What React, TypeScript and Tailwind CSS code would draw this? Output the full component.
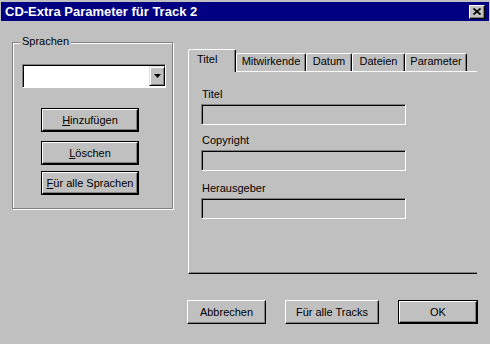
import React from "react";

const raised =
  "border border-t-white border-l-white border-b-black border-r-black shadow-[inset_-1px_-1px_0_#808080]";
const sunken =
  "border border-t-[#808080] border-l-[#808080] border-b-white border-r-white shadow-[inset_1px_1px_0_#000]";

const Btn = ({
  children,
  w,
  framed,
}: {
  children: React.ReactNode;
  w: string;
  framed?: boolean;
}) => {
  if (framed) {
    return (
      <div className={`${w} h-[24px] border border-black flex`}>
        <div className={`flex-1 ${raised} flex items-center justify-center text-[11px] leading-[13px]`}>
          {children}
        </div>
      </div>
    );
  }
  return (
    <div className={`${w} h-[24px] ${raised} flex items-center justify-center text-[11px] leading-[13px]`}>
      {children}
    </div>
  );
};

const Field = ({ label, className }: { label: string; className?: string }) => (
  <div className={className}>
    <div className="ml-[1px] h-[13px] text-[11px] leading-[13px] mb-[3px]">{label}</div>
    <div className={`w-[205px] h-[21px] bg-[#c0c0c0] ${sunken}`} />
  </div>
);

const tabs = [
  { name: "Mitwirkende", w: "w-[70px]" },
  { name: "Datum", w: "w-[46px]" },
  { name: "Dateien", w: "w-[53px]" },
  { name: "Parameter", w: "w-[62px]" },
];

export default function App() {
  return (
    <div className="w-[490px] h-[344px] bg-[#c0c0c0] overflow-hidden font-['Liberation_Sans',Arial,sans-serif] text-black flex flex-col">
      {/* title bar */}
      <div className="mt-[2px] mx-[1px] h-[19px] bg-[#000080] flex items-center justify-between pl-[4px] pr-[4px]">
        <span className="text-white font-bold text-[13px] leading-[16px]">CD-Extra Parameter für Track 2</span>
        <div className={`w-[16px] h-[14px] bg-[#c0c0c0] ${raised} flex items-center justify-center`}>
          <svg width="8" height="7" viewBox="0 0 8 7">
            <path d="M0.5 0.5 L7.5 6.5 M7.5 0.5 L0.5 6.5" stroke="#000" strokeWidth="1.7" />
          </svg>
        </div>
      </div>

      <div className="flex items-start">
        {/* Sprachen group */}
        <div className="ml-[12px] mt-[21px] w-[161px] h-[167px] relative border border-[#808080] shadow-[inset_1px_1px_0_#fff,1px_1px_0_#fff] pl-[9px] pt-[21px] flex flex-col items-start">
          <span className="absolute left-[7px] -top-[8px] px-[2px] bg-[#c0c0c0] text-[11px] leading-[13px]">
            Sprachen
          </span>
          <div className={`w-[144px] h-[24px] ${sunken} bg-white flex justify-end`}>
            <div className="mt-[1px] w-[16px] h-[20px] border border-t-[#dfdfdf] border-l-[#dfdfdf] border-b-black border-r-black bg-[#c0c0c0] shadow-[inset_1px_1px_0_#fff,inset_-1px_-1px_0_#808080] flex items-center justify-center">
              <svg width="7" height="4" viewBox="0 0 7 4">
                <path d="M0 0 H7 L3.5 4 Z" fill="#000" />
              </svg>
            </div>
          </div>
          <div className="ml-[19px] mt-[20px] flex flex-col">
            <Btn w="w-[98px]" framed>
              <span><u>H</u>inzufügen</span>
            </Btn>
            <div className="mt-[9px]">
              <Btn w="w-[98px]" framed>
                <span><u>L</u>öschen</span>
              </Btn>
            </div>
            <div className="mt-[6px]">
              <Btn w="w-[98px]" framed>
                <span><u>F</u>ür alle Sprachen</span>
              </Btn>
            </div>
          </div>
        </div>

        {/* tab control */}
        <div className="ml-[15px] mt-[28px] w-[289px] flex flex-col">
          <div className="h-[22px] flex items-end">
            <div className="relative z-10 -mb-[1px] w-[48px] h-[23px] bg-[#c0c0c0] border-t border-l border-r border-t-white border-l-white border-r-black rounded-tl-[2px] rounded-tr-[2px] shadow-[inset_-1px_0_0_#808080] pl-[8px] pt-[3px] text-[11px] leading-[13px]">
              Titel
            </div>
            {tabs.map((t) => (
              <div
                key={t.name}
                className={`${t.w} h-[18px] border-t border-l border-r border-t-white border-l-white border-r-black rounded-tl-[2px] rounded-tr-[2px] shadow-[inset_-1px_0_0_#808080] flex justify-center pt-[1px] text-[11px] leading-[13px]`}
              >
                {t.name}
              </div>
            ))}
          </div>
          <div className="h-[203px] border-t border-l border-b border-t-white border-l-white border-b-black shadow-[inset_0_-1px_0_#808080] pl-[12px] pt-[16px]">
            <Field label="Titel" />
            <Field label="Copyright" className="mt-[9px]" />
            <Field label="Herausgeber" className="mt-[11px]" />
          </div>
        </div>
      </div>

      {/* bottom buttons */}
      <div className="mt-[26px] pl-[187px] flex gap-[19px]">
        <Btn w="w-[79px]">Abbrechen</Btn>
        <Btn w="w-[94px]">Für alle Tracks</Btn>
        <Btn w="w-[80px]" framed>OK</Btn>
      </div>
    </div>
  );
}
